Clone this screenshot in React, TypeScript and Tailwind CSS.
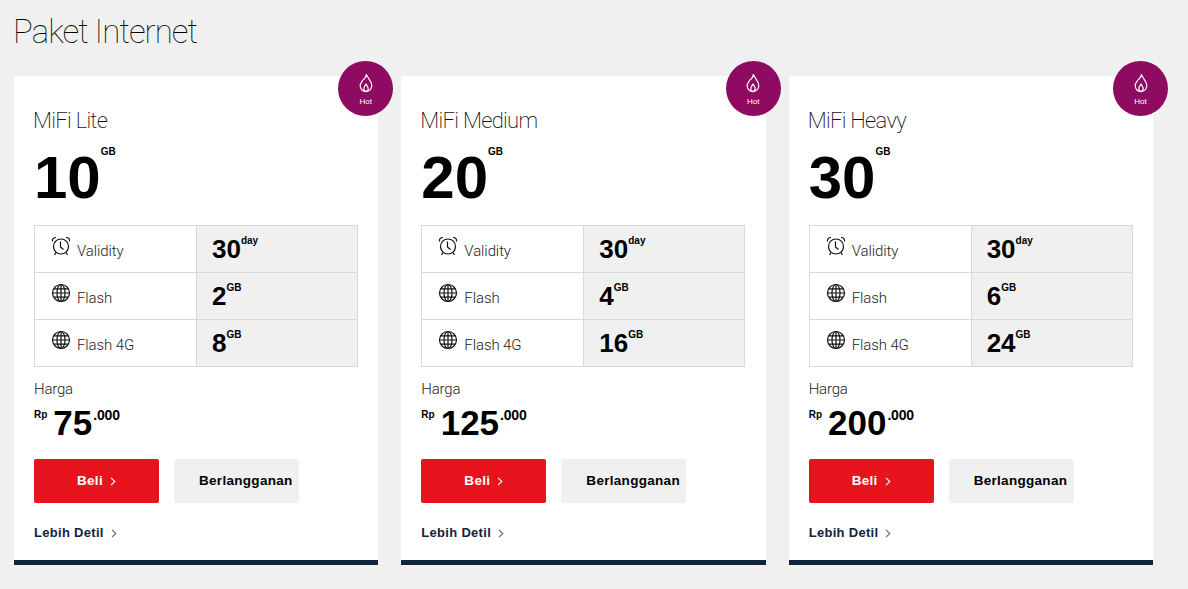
const plans = [
  { name: "MiFi Lite", quota: "10", flash: "2", flash4g: "8", price: "75" },
  { name: "MiFi Medium", quota: "20", flash: "4", flash4g: "16", price: "125" },
  { name: "MiFi Heavy", quota: "30", flash: "6", flash4g: "24", price: "200" },
];

const light = "font-['Roboto',sans-serif] font-light";
const extralight = "font-['Roboto',sans-serif] font-extralight";
const thin = "font-['Roboto',sans-serif] font-thin";
const heavy = "font-['Liberation_Sans',sans-serif] font-bold";

const ClockIcon = () => (
  <svg width="20" height="20" viewBox="0 0 20 20" fill="none" stroke="#111" strokeWidth="1.2">
    <circle cx="10" cy="10.5" r="7.5" />
    <path d="M9.5 5.5v5.5l3 2.5" />
    <path d="M1.5 5.5C1 3 2.5 1.5 5 1.5M18.5 5.5C19 3 17.5 1.5 15 1.5" />
    <path d="M5 16.5l-1.5 2.5M15 16.5l1.5 2.5" />
  </svg>
);

const GlobeIcon = () => (
  <svg width="20" height="20" viewBox="0 0 20 20" fill="none" stroke="#111" strokeWidth="1.2">
    <circle cx="10" cy="10" r="8.5" />
    <ellipse cx="10" cy="10" rx="4" ry="8.5" />
    <path d="M10 1.5v17M1.5 10h17M2.8 5.8h14.4M2.8 14.2h14.4" />
  </svg>
);

const FlameIcon = () => (
  <svg width="14" height="20" viewBox="0 0 14 20" fill="none" stroke="#fff" strokeWidth="1.2">
    <path d="M7.5 1C8 5 12.8 7.5 12.8 12.6C12.8 16.2 10.2 18.6 7 18.6C3.8 18.6 1.2 16.2 1.2 12.8C1.2 10.4 2.6 9 3.6 7.4C5.6 5.8 7.4 3.8 7.5 1Z" />
    <path d="M7 10.5C7.4 12.6 9.2 13.6 9.2 15.6C9.2 17 8.2 18.4 7 18.4C5.8 18.4 4.8 17 4.8 15.6C4.8 13.6 6.6 12.6 7 10.5Z" />
  </svg>
);

const Chevron = ({ color }: { color: string }) => (
  <svg width="6" height="9" viewBox="0 0 6 9" fill="none" stroke={color} strokeWidth="1.1">
    <path d="M1 .8L4.8 4.5L1 8.2" />
  </svg>
);

const Row = ({
  icon,
  label,
  value,
  unit,
  last,
}: {
  icon: React.ReactNode;
  label: string;
  value: string;
  unit: string;
  last?: boolean;
}) => (
  <div className={`flex ${last ? "h-[46px]" : "h-[47px] border-b border-[#d9d9d9]"}`}>
    <div className="flex w-[162px] border-r border-[#d9d9d9] pl-[16px] pt-[10px]">
      {icon}
      <span className={`${light} ml-[6px] mt-[6px] text-[15px] leading-[18px] tracking-[-0.1px] text-[#222]`}>{label}</span>
    </div>
    <div className="flex flex-1 bg-[#f0f0f0] pl-[15px] pt-[8px]">
      <span className={`${heavy} text-[26px] leading-[30px] text-black`}>{value}</span>
      <span className={`${heavy} mt-[1px] text-[10px] leading-[12px] text-black`}>{unit}</span>
    </div>
  </div>
);

const PlanCard = ({ plan }: { plan: (typeof plans)[number] }) => (
  <div className="relative h-[489px] border-b-[5px] border-[#12233d] bg-white px-[20px]">
    <div className="absolute -right-[15px] -top-[15px] flex h-[55px] w-[55px] flex-col items-center rounded-full bg-[#8f0a61] pt-[12px]">
      <FlameIcon />
      <span className="mt-[4px] font-['Liberation_Sans',sans-serif] text-[8px] leading-[10px] text-white">Hot</span>
    </div>

    <div className={`${extralight} -ml-[1px] pt-[32px] text-[22px] leading-[26px] tracking-[-0.7px] text-[#111]`}>{plan.name}</div>

    <div className="mt-[12px] flex h-[56px]">
      <span className={`${heavy} pt-[2px] text-[60px] leading-[60px] text-black`}>{plan.quota}</span>
      <span className={`${heavy} text-[10px] leading-[12px] text-black`}>GB</span>
    </div>

    <div className="mt-[23px] w-[324px] border border-[#d9d9d9]">
      <Row icon={<ClockIcon />} label="Validity" value="30" unit="day" />
      <Row icon={<GlobeIcon />} label="Flash" value={plan.flash} unit="GB" />
      <Row icon={<GlobeIcon />} label="Flash 4G" value={plan.flash4g} unit="GB" last />
    </div>

    <div className={`${light} mt-[13px] text-[15px] leading-[18px] tracking-[-0.2px] text-[#222]`}>Harga</div>

    <div className="mt-[4px] flex h-[40px]">
      <span className={`${heavy} mt-[7px] text-[10px] leading-[12px] text-black`}>Rp</span>
      <span className={`${heavy} ml-[6px] text-[35px] leading-[42px] text-black`}>{plan.price}</span>
      <span className={`${heavy} ml-[1px] mt-[6px] text-[14px] leading-[14px] tracking-[-0.2px] text-black`}>.000</span>
    </div>

    <div className="mt-[17px] flex gap-[15px]">
      <button className={`${heavy} flex h-[44px] w-[125px] items-center justify-center gap-[7px] rounded-[2px] bg-[#e8141d] text-[13.5px] tracking-[0.3px] text-white`}>
        Beli <Chevron color="#fff" />
      </button>
      <button className={`${heavy} h-[44px] w-[125px] rounded-[2px] bg-[#f0f0f0] pl-[25px] text-left text-[13.5px] tracking-[0.3px] text-black`}>
        Berlangganan
      </button>
    </div>

    <div className={`${heavy} mt-[22px] flex items-center gap-[7px] text-[13px] leading-[16px] tracking-[0.3px] text-[#12233d]`}>
      Lebih Detil <Chevron color="#666" />
    </div>
  </div>
);

const App = () => {
  return (
    <div className="h-[589px] w-[1188px] overflow-hidden bg-[#f0f0f0] px-[14px]">
      <h1 className={`${thin} -ml-[1px] pt-[13px] text-[33px] leading-[38px] tracking-[-0.95px] text-black`}>Paket Internet</h1>
      <div className="mt-[25px] grid w-[1139px] grid-cols-3 gap-[23px]">
        {plans.map((plan) => (
          <PlanCard key={plan.name} plan={plan} />
        ))}
      </div>
    </div>
  );
};

export default App;
